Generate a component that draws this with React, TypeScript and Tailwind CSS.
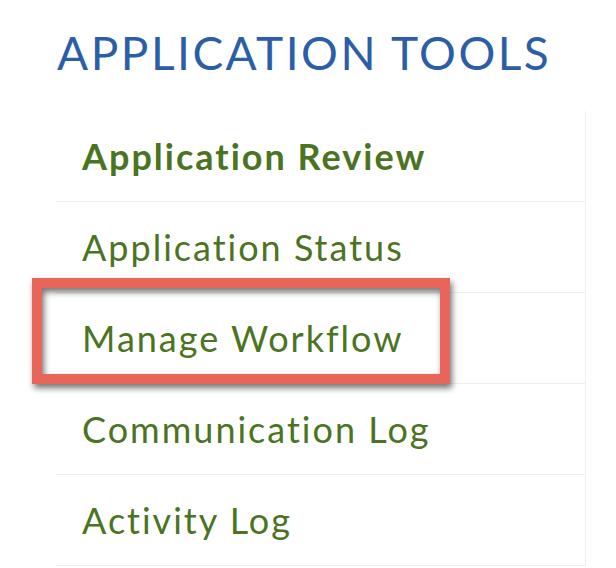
import React from "react";

const items = [
  { label: "Application Review", bold: true },
  { label: "Application Status", bold: false },
  { label: "Manage Workflow", bold: false },
  { label: "Communication Log", bold: false },
  { label: "Activity Log", bold: false },
];

export default function App() {
  return (
    <div
      className="relative w-[616px] h-[568px] overflow-hidden bg-white"
      style={{ fontFamily: "Lato, 'Open Sans', sans-serif" }}
    >
      <div className="h-[111px] flex items-center pl-[57px] pb-[6px]">
        <h1 className="text-[46px] leading-none font-normal text-[#2b5ea7] tracking-[2.5px]">
          APPLICATION TOOLS
        </h1>
      </div>
      <ul className="ml-[56px] w-[530px] border-r border-[#f0f0f0]">
        {items.map((it) => (
          <li
            key={it.label}
            className={`h-[91px] flex items-center pl-[26px] border-b border-[#eeeeee] text-[36px] leading-none tracking-[2px] text-[#4b7422] ${
              it.bold ? "font-bold" : "font-normal"
            }`}
          >
            {it.label}
          </li>
        ))}
      </ul>
      <div className="absolute left-[32px] top-[278px] w-[418px] h-[106px] border-[10px] border-[#e8655a] drop-shadow-[2px_4px_3px_rgba(0,0,0,0.55)]" />
    </div>
  );
}
